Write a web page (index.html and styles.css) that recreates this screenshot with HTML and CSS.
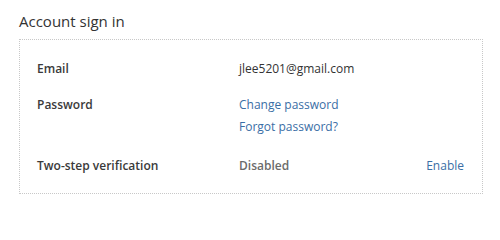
FILE: index.html
```html
<!DOCTYPE html>
<html lang="en">
<head>
<meta charset="utf-8">
<title>Account sign in</title>
<link rel="stylesheet" href="styles.css">
</head>
<body>
<section class="panel">
  <h2 class="panel-title">Account sign in</h2>
  <div class="card">
    <div class="row">
      <div class="label">Email</div>
      <div class="value">jlee5201@gmail.com</div>
      <div class="action"></div>
    </div>
    <div class="row">
      <div class="label">Password</div>
      <div class="value links">
        <a href="#" class="link">Change password</a>
        <a href="#" class="link">Forgot password?</a>
      </div>
      <div class="action"></div>
    </div>
    <div class="row">
      <div class="label">Two-step verification</div>
      <div class="value muted">Disabled</div>
      <div class="action"><a href="#" class="link">Enable</a></div>
    </div>
  </div>
</section>
</body>
</html>
```
FILE: styles.css
```css
html, body {
  margin: 0;
  padding: 0;
  background: #ffffff;
}
body {
  font-family: "Open Sans", "Noto Sans", sans-serif;
  color: #333333;
}
.panel {
  padding: 11px 18px 0 19px;
}
.panel-title {
  margin: 0;
  font-size: 15px;
  font-weight: 400;
  line-height: 20px;
  color: #333333;
}
.card {
  margin-top: 8px;
  width: 464px;
  box-sizing: border-box;
  border: 1px dotted #c8c8c8;
  padding: 18px 18px 16px 17px;
  display: flex;
  flex-direction: column;
  gap: 14px;
}
.row {
  display: grid;
  grid-template-columns: 202px 1fr auto;
  font-size: 12px;
  line-height: 22px;
}
.label {
  font-weight: 600;
  color: #3a3a3a;
}
.value {
  color: #333333;
}
.links {
  display: flex;
  flex-direction: column;
  padding-bottom: 3px;
}
.muted {
  color: #6b6b6b;
  font-weight: 600;
}
.link {
  color: #3a6ea5;
  text-decoration: none;
}
.action {
  text-align: right;
}
```
